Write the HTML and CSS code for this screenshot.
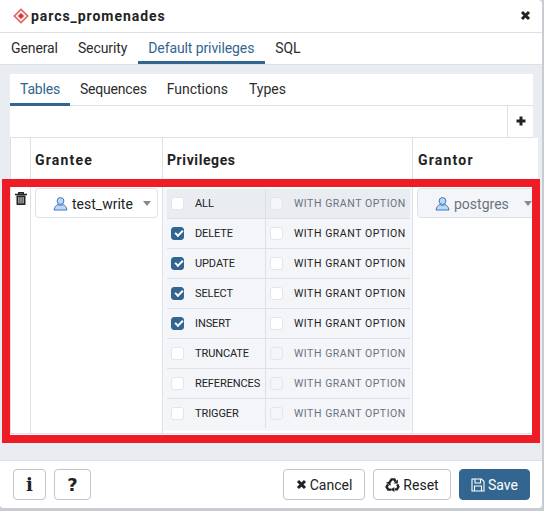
FILE: index.html
```html
<!DOCTYPE html>
<html lang="en">
  <head>
    <meta charset="UTF-8" />
    <title>parcs_promenades</title>
    <link rel="stylesheet" href="styles.css">
  </head>
  <body>
    <div class="dialog">
      <header class="dialog-head">
        <svg class="db-icon" width="16" height="16" viewBox="0 0 16 16">
          <path d="M8 1.2 14.8 8 8 14.8 1.2 8Z" fill="#fbe9e9" stroke="#e0595c" stroke-width="1.4"/>
          <path d="M8 5 11 8 8 11 5 8Z" fill="#d9363a"/>
        </svg>
        <h1 class="title">parcs_promenades</h1>
        <svg class="close" width="11" height="11" viewBox="0 0 11 11">
          <path d="M2 2 9 9M9 2 2 9" stroke="#222" stroke-width="3"/>
        </svg>
      </header>

      <ul class="tabs main-tabs">
        <li>General</li>
        <li>Security</li>
        <li class="active">Default privileges</li>
        <li>SQL</li>
      </ul>

      <div class="body">
        <div class="card">
          <ul class="tabs sub-tabs">
            <li class="active">Tables</li>
            <li>Sequences</li>
            <li class="wider">Functions</li>
            <li class="wider">Types</li>
          </ul>
          <div class="toolbar">
            <button class="add-btn">
              <svg width="10" height="10" viewBox="0 0 10 10"><path d="M5 0.5V9.5M0.5 5H9.5" stroke="#222" stroke-width="3"/></svg>
            </button>
          </div>

          <div class="grid">
            <div class="head-cell gutter"></div>
            <div class="head-cell spaced">Grantee</div>
            <div class="head-cell">Privileges</div>
            <div class="head-cell spaced grantor">Grantor</div>

            <div class="cell del-cell">
              <svg width="12" height="13" viewBox="0 0 12 13">
                <path d="M0 2.5H12M3.8 2.5V0.8H8.2V2.5" fill="none" stroke="#222" stroke-width="1.5"/>
                <path d="M1.5 3.5H10.5V12.3Q10.5 13 9.8 13H2.2Q1.5 13 1.5 12.3Z" fill="#222"/>
                <path d="M3.9 5V11.5M6 5V11.5M8.1 5V11.5" stroke="#fff" stroke-width="0.9"/>
              </svg>
            </div>
            <div class="cell">
              <div class="select">
                <svg class="role-icon" width="15" height="15" viewBox="0 0 15 15">
                  <circle cx="7.5" cy="5" r="3.4" fill="#bcd9f2" stroke="#3f78c4"/>
                  <path d="M1 14C1.5 10.5 3.5 9 5 8.6 6.5 9.6 8.5 9.6 10 8.6 11.5 9 13.5 10.5 14 14Z" fill="#bcd9f2" stroke="#3f78c4"/>
                </svg>
                <span>test_write</span>
                <i class="caret"></i>
              </div>
            </div>
            <div class="cell priv-cell">
              <div class="priv-list">
                <div class="priv-row first">
                  <div class="priv-name"><i class="check"></i>ALL</div>
                  <div class="priv-grant off"><i class="check"></i>WITH GRANT OPTION</div>
                </div>
                <div class="priv-row">
                  <div class="priv-name"><i class="check on"></i>DELETE</div>
                  <div class="priv-grant"><i class="check"></i>WITH GRANT OPTION</div>
                </div>
                <div class="priv-row">
                  <div class="priv-name"><i class="check on"></i>UPDATE</div>
                  <div class="priv-grant"><i class="check"></i>WITH GRANT OPTION</div>
                </div>
                <div class="priv-row">
                  <div class="priv-name"><i class="check on"></i>SELECT</div>
                  <div class="priv-grant"><i class="check"></i>WITH GRANT OPTION</div>
                </div>
                <div class="priv-row">
                  <div class="priv-name"><i class="check on"></i>INSERT</div>
                  <div class="priv-grant"><i class="check"></i>WITH GRANT OPTION</div>
                </div>
                <div class="priv-row">
                  <div class="priv-name"><i class="check"></i>TRUNCATE</div>
                  <div class="priv-grant off"><i class="check"></i>WITH GRANT OPTION</div>
                </div>
                <div class="priv-row">
                  <div class="priv-name"><i class="check"></i>REFERENCES</div>
                  <div class="priv-grant off"><i class="check"></i>WITH GRANT OPTION</div>
                </div>
                <div class="priv-row">
                  <div class="priv-name"><i class="check"></i>TRIGGER</div>
                  <div class="priv-grant off"><i class="check"></i>WITH GRANT OPTION</div>
                </div>
              </div>
            </div>
            <div class="cell last">
              <div class="select disabled">
                <svg class="role-icon" width="15" height="15" viewBox="0 0 15 15">
                  <circle cx="7.5" cy="5" r="3.4" fill="#bcd9f2" stroke="#3f78c4"/>
                  <path d="M1 14C1.5 10.5 3.5 9 5 8.6 6.5 9.6 8.5 9.6 10 8.6 11.5 9 13.5 10.5 14 14Z" fill="#bcd9f2" stroke="#3f78c4"/>
                </svg>
                <span>postgres</span>
                <i class="caret"></i>
              </div>
            </div>
          </div>
        </div>
      </div>

      <footer class="foot">
        <button class="btn square info">i</button>
        <button class="btn square help">?</button>
        <div class="spacer"></div>
        <button class="btn cancel">
          <svg width="11" height="11" viewBox="0 0 11 11"><path d="M2 2 9 9M9 2 2 9" stroke="#222" stroke-width="3"/></svg>
          Cancel
        </button>
        <button class="btn reset">
          <svg width="15" height="14" viewBox="0 0 15 14">
            <path d="M4.6 4.2 6.6 1.4H9.4L10.6 3.6M12.2 6.4 13.4 8.8 12 11.4H9.8M6.4 11.6H3.2L1.6 9 3 6.4" fill="none" stroke="#222" stroke-width="2.4"/>
            <path d="M8.6 5.6 12.8 5.4 13 1.6ZM9.4 9 9.4 14 5.8 11.4ZM1 4.6 5.4 3.4 5.6 8Z" fill="#222"/>
          </svg>
          Reset
        </button>
        <button class="btn save">
          <svg width="14" height="14" viewBox="0 0 14 14">
            <path d="M1 1H10.5L13 3.5V13H1ZM4 1V5H9.5V1M3.5 13V8H10.5V13" fill="none" stroke="#fff" stroke-width="1.1"/>
          </svg>
          Save
        </button>
      </footer>
    </div>

    <div class="highlight"></div>
  </body>
</html>
```

FILE: styles.css
```css
* {
  box-sizing: border-box;
}

body {
  margin: 0;
  width: 544px;
  height: 511px;
  overflow: hidden;
  background-color: #c9ccd3;
  font-family: "Roboto", sans-serif;
  font-size: 14px;
  color: #222;
}

ul {
  list-style: none;
  margin: 0;
  padding: 0;
}

.dialog {
  width: 542px;
  height: 508px;
  background-color: #fff;
  border-radius: 0 4px 4px 4px;
  display: flex;
  flex-direction: column;
  overflow: hidden;
}

.dialog-head {
  height: 33px;
  flex: none;
  display: flex;
  align-items: center;
  padding: 0 11px 1px 13px;
  border-bottom: 1px solid #dde0e6;
}

.title {
  margin: 0 0 0 2px;
  flex: 1;
  font-size: 14px;
  font-weight: 700;
  letter-spacing: 0.95px;
}

.tabs {
  display: flex;
  background-color: #fff;
}

.tabs li {
  color: #2c2c2c;
  border-bottom: 3px solid transparent;
}

.tabs .active {
  color: #326690;
  border-bottom-color: #326690;
}

.main-tabs {
  height: 32px;
  flex: none;
  padding-top: 7px;
  border-bottom: 1px solid #dde0e6;
}

.main-tabs li {
  height: 24px;
  padding: 0 11px 0 10px;
  margin-bottom: -1px;
  letter-spacing: -0.1px;
}

.main-tabs li:first-child {
  padding: 0 10px 0 11px;
}

.body {
  flex: 1;
  background-color: #e9ecf1;
  padding: 9px 9px 0 10px;
}

.card {
  width: 523px;
  height: 361px;
  background-color: #fff;
  border-radius: 4px 4px 0 0;
}

.sub-tabs {
  height: 32px;
  padding-top: 7px;
  border-bottom: 1px solid #dde0e6;
}

.sub-tabs li {
  height: 25px;
  padding: 0 10px;
  letter-spacing: -0.2px;
}

.sub-tabs .wider {
  letter-spacing: 0;
  padding-right: 11px;
}

.toolbar {
  height: 32px;
  display: flex;
  justify-content: flex-end;
  border-bottom: 1px solid #dde0e6;
}

.add-btn {
  width: 26px;
  height: 31px;
  padding: 0;
  background: #fff;
  border: none;
  border-left: 1px solid #dde0e6;
}

.grid {
  width: 528px;
  height: 296px;
  display: grid;
  grid-template-columns: 20px 132px 250px 126px;
  grid-template-rows: 42px 254px;
  background-color: #fff;
}

.head-cell {
  padding: 14px 0 0 4px;
  border-left: 1px solid #dde0e6;
  border-bottom: 1px solid #dde0e6;
  font-weight: 700;
  letter-spacing: 0.6px;
}

.head-cell.spaced {
  letter-spacing: 1.2px;
}

.head-cell.grantor {
  padding-left: 5px;
}

.gutter {
  padding: 0;
}

.cell {
  border-left: 1px solid #dde0e6;
  border-bottom: 1px solid #dde0e6;
  padding: 8px 4px 0 4px;
}

.cell.last {
  padding-right: 0;
}

.del-cell {
  padding: 12px 0 0 4px;
}

.select {
  height: 30px;
  display: flex;
  align-items: center;
  padding: 1px 0 0 17px;
  border: 1px solid #dde0e6;
  border-radius: 4px;
  background-color: #fff;
  font-size: 14px;
}

.select span {
  margin-left: 4px;
  flex: 1;
}

.select.disabled {
  background-color: #f3f5f9;
  color: #6b727d;
  width: 122px;
}

.caret {
  width: 0;
  height: 0;
  margin-right: 6px;
  border-left: 4px solid transparent;
  border-right: 4px solid transparent;
  border-top: 5px solid #8a8a8a;
}

.priv-cell {
  padding: 8px 0 2px;
}

.priv-list {
  height: 243px;
  padding: 1px 2px 0 4px;
  background-color: #f6f7fa;
}

.priv-row {
  height: 30px;
  display: flex;
  background-color: #f3f5f9;
  border-bottom: 1px solid #dde0e6;
  font-size: 11px;
  letter-spacing: -0.1px;
}

.priv-row:last-child {
  border-bottom-color: #f3f5f9;
}

.priv-row.first {
  background-color: #e9ecf1;
}

.priv-name,
.priv-grant {
  display: flex;
  align-items: center;
}

.priv-name {
  width: 99px;
  padding-left: 4px;
  border-right: 1px solid #dde0e6;
}

.priv-grant {
  padding-left: 4px;
  font-size: 10.5px;
  letter-spacing: 0.55px;
}

.priv-grant.off {
  color: #6b727d;
}

.check {
  width: 13px;
  height: 13px;
  margin-right: 11px;
  flex: none;
  background-color: #fff;
  border: 1px solid #e2e5ea;
  border-radius: 3px;
  position: relative;
}

.priv-grant.off .check {
  background-color: #f3f5f9;
}

.check.on {
  background-color: #326690;
  border-color: #326690;
}

.check.on::after {
  content: "";
  position: absolute;
  left: 2.5px;
  top: 2px;
  width: 6px;
  height: 3px;
  border-left: 2px solid #fff;
  border-bottom: 2px solid #fff;
  transform: rotate(-45deg);
}

.foot {
  height: 48px;
  flex: none;
  display: flex;
  align-items: center;
  padding: 0 12px 0 13px;
  border-top: 1px solid #dde0e6;
  background-color: #fff;
}

.spacer {
  flex: 1;
}

.btn {
  height: 31px;
  padding: 0;
  display: flex;
  align-items: center;
  justify-content: center;
  gap: 3px;
  background-color: #fff;
  border: 1px solid #bfc4cf;
  border-radius: 4px;
  font-family: "Roboto", sans-serif;
  font-size: 14px;
  color: #222;
}

.square {
  font-weight: 700;
  font-size: 18px;
}

.info {
  width: 33px;
  margin-right: 8px;
  font-family: "DejaVu Serif", serif;
}

.help {
  width: 37px;
  font-family: "DejaVu Sans", sans-serif;
}

.cancel {
  width: 82px;
  margin-right: 8px;
}

.reset {
  width: 78px;
  margin-right: 8px;
}

.save {
  width: 71px;
  background-color: #326690;
  border-color: #326690;
  color: #fff;
}

/* red box drawn over the screenshot */
.highlight {
  position: absolute;
  left: 2px;
  top: 179px;
  width: 538px;
  height: 264px;
  border: 8px solid #ee1c25;
}
```
